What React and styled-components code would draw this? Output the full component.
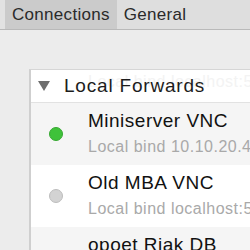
import React from 'react'
import styled, { createGlobalStyle } from 'styled-components'

const Global = createGlobalStyle`
  html, body {
    margin: 0;
    padding: 0;
    background: #ececec;
    font-family: "Liberation Sans", Arial, sans-serif;
    overflow: hidden;
  }
`

const Page = styled.div`
  width: 250px;
  height: 250px;
  overflow: hidden;
`

const TabBar = styled.div`
  display: flex;
  height: 29px;
  padding-left: 5px;
  background: #e2e2e2;
  border-bottom: 1px solid #b9b9b9;
`

const Tab = styled.div`
  display: flex;
  align-items: center;
  padding: 0 7px;
  font-size: 17px;
  letter-spacing: 0.3px;
  color: #2a2a2a;
  background: ${p => (p.$active ? '#cbcbcb' : '#dedede')};
  flex: ${p => (p.$active ? '0 0 auto' : '1 1 auto')};
`

const Body = styled.div`
  padding: 39px 0 0 29px;
`

const Panel = styled.div`
  background: #fff;
  border-left: 2px solid #cfcfcf;
  border-top: 1px solid #d6d6d6;
`

const Header = styled.div`
  position: relative;
  display: flex;
  align-items: center;
  height: 32px;
  border-bottom: 1px solid #e2e2e2;
  font-size: 19px;
  letter-spacing: 0.8px;
  color: #1c1c1c;
  overflow: hidden;
  white-space: nowrap;
`

const Ghost = styled.span`
  position: absolute;
  left: 57px;
  top: 3px;
  font-size: 16px;
  letter-spacing: 0.5px;
  color: #f3f3f3;
`

const Triangle = styled.span`
  flex-shrink: 0;
  width: 0;
  height: 0;
  margin: 0 14px 0 7px;
  border-left: 6px solid transparent;
  border-right: 6px solid transparent;
  border-top: 10px solid #6e6e6e;
`

const HeaderLabel = styled.span`
  position: relative;
`

const Row = styled.div`
  display: flex;
  height: 62px;
  overflow: hidden;
  background: ${p => (p.$odd ? '#f5f5f5' : '#ffffff')};
`

const DotCell = styled.div`
  flex: 0 0 57px;
  display: flex;
  align-items: center;
  justify-content: flex-end;
  padding-right: 25px;
  box-sizing: border-box;
`

const Dot = styled.span`
  width: 14px;
  height: 14px;
  border-radius: 50%;
  box-sizing: border-box;
  background: ${p => (p.$on ? '#3fc23a' : '#d3d3d3')};
  border: 1px solid ${p => (p.$on ? '#36a831' : '#bdbdbd')};
`

const Info = styled.div`
  display: flex;
  flex-direction: column;
  padding-top: 6px;
  white-space: nowrap;
`

const Title = styled.div`
  font-size: 19px;
  line-height: 24px;
  letter-spacing: 0.5px;
  color: #111;
`

const Sub = styled.div`
  font-size: 16px;
  line-height: 22px;
  margin-top: 3px;
  letter-spacing: 0.5px;
  color: #a9a9a9;
`

const forwards = [
  { name: 'Miniserver VNC', bind: 'Local bind 10.10.20.40:5900', on: true },
  { name: 'Old MBA VNC', bind: 'Local bind localhost:5901', on: false },
  { name: 'opoet Riak DB', bind: 'Local bind localhost:8087', on: false },
]

export default function App() {
  return (
    <Page>
      <Global />
      <TabBar>
        <Tab $active>Connections</Tab>
        <Tab>General</Tab>
      </TabBar>
      <Body>
        <Panel>
          <Header>
            <Ghost>Local bind localhost:5901</Ghost>
            <Triangle />
            <HeaderLabel>Local Forwards</HeaderLabel>
          </Header>
          {forwards.map((f, i) => (
            <Row key={f.name} $odd={i % 2 === 0}>
              <DotCell>
                <Dot $on={f.on} />
              </DotCell>
              <Info>
                <Title>{f.name}</Title>
                <Sub>{f.bind}</Sub>
              </Info>
            </Row>
          ))}
        </Panel>
      </Body>
    </Page>
  )
}
